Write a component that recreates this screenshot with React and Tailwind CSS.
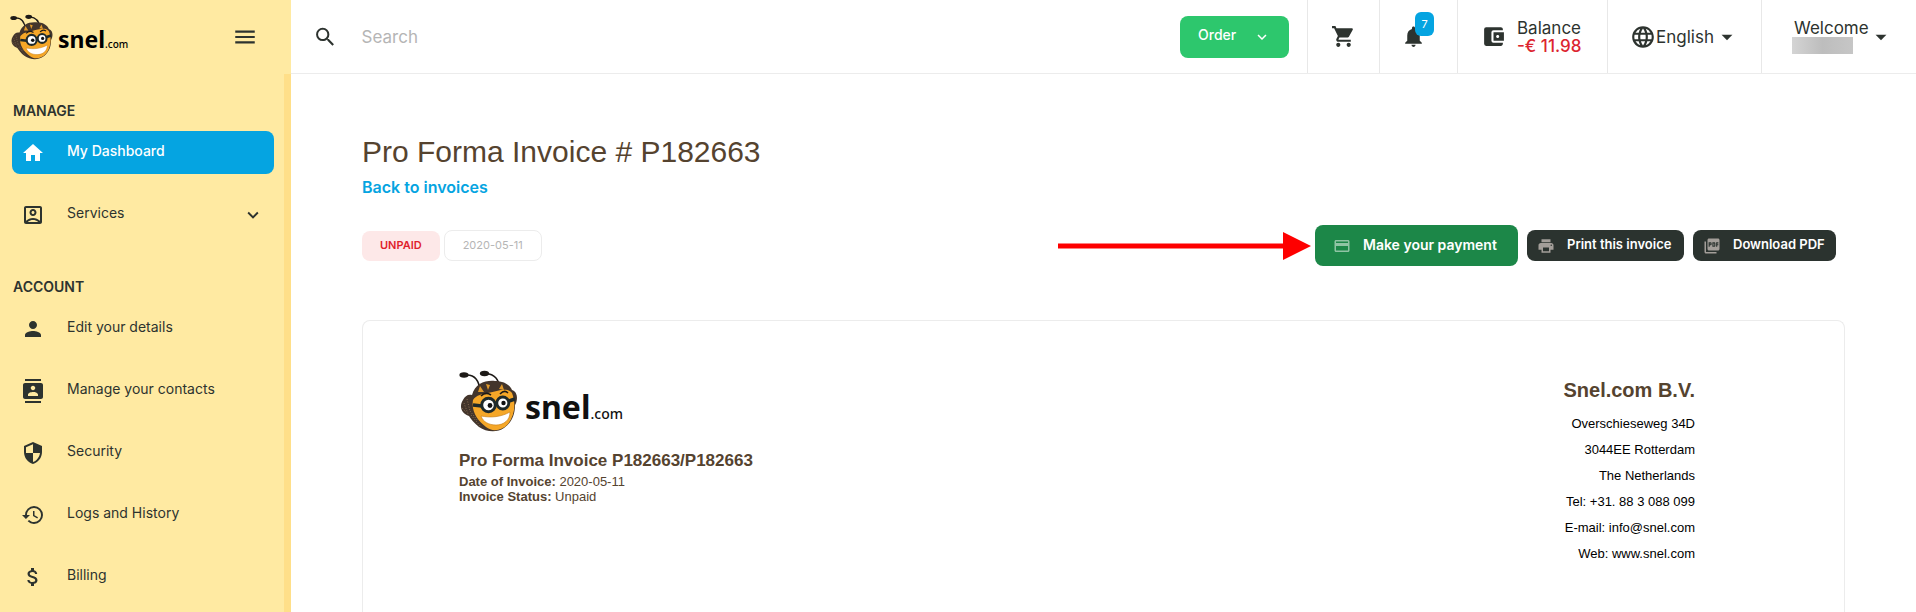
import React, { useState } from 'react';
import {
  MdHome, MdPerson, MdContacts, MdSecurity, MdHistory, MdAttachMoney,
  MdMenu, MdSearch, MdShoppingCart, MdNotifications, MdAccountBalanceWallet,
  MdLanguage, MdArrowDropDown, MdExpandMore, MdPayment, MdPrint, MdPictureAsPdf,
  MdOutlineAccountBox
} from 'react-icons/md';

const MENU = [
  {
    title: 'MANAGE',
    items: [
      { label: 'My Dashboard', icon: MdHome, active: true },
      { label: 'Services', icon: MdOutlineAccountBox, expandable: true }
    ]
  },
  {
    title: 'ACCOUNT',
    items: [
      { label: 'Edit your details', icon: MdPerson },
      { label: 'Manage your contacts', icon: MdContacts },
      { label: 'Security', icon: MdSecurity },
      { label: 'Logs and History', icon: MdHistory },
      { label: 'Billing', icon: MdAttachMoney }
    ]
  }
];

const COMPANY_LINES = [
  'Overschieseweg 34D',
  '3044EE Rotterdam',
  'The Netherlands',
  'Tel: +31. 88 3 088 099',
  'E-mail: info@snel.com',
  'Web: www.snel.com'
];

const BeeHead = ({ className }) => (
  <svg viewBox="0 0 60 62" className={className} aria-hidden="true">
    <path d="M8 5C15 5 20 9 21 21" fill="none" stroke="#1d1a17" strokeWidth="1.6" />
    <path d="M27 3.5C35 4 40 9 41 19" fill="none" stroke="#1d1a17" strokeWidth="1.6" />
    <ellipse cx="5" cy="5" rx="4.6" ry="2.8" fill="#1d1a17" />
    <ellipse cx="25.5" cy="3.5" rx="4.6" ry="2.8" fill="#1d1a17" />
    {/* hair and ear muffs */}
    <path d="M13 25C16 14 26 10 36 11C45 11 51 15 53 20C59 22 59 30 56 35C56 46 52 53 45 58C38 63 27 62 20 57C15 53 12 49 10 46C2 43 0 36 4 30C6 26 9 24 13 25Z" fill="#43352b" />
    <path d="M14 30C17 25 24 24 29 23C39 21 48 17 53 23C57 33 56 45 49 54C43 61 33 62 27 57C19 51 12 42 14 30Z" fill="#f5a728" />
    <path d="M19 22L21 16L25 22ZM27 14L29 20L31 15ZM40 19L43 14L45 20Z" fill="#e09a2b" />
    <path d="M5 33L9 44M8 29L11 41M12 45L22 57M3 38L7 42M11 41L19 51" stroke="#9a7d60" strokeWidth="0.8" strokeDasharray="1 1.6" />
    <path d="M14 35L23 36M36 34L38 33M50 31L56 29" stroke="#1f2a2a" strokeWidth="3.5" />
    <circle cx="29.5" cy="35" r="6.8" fill="#fff" stroke="#1f2a2a" strokeWidth="3" />
    <circle cx="43.8" cy="33" r="6" fill="#fff" stroke="#1f2a2a" strokeWidth="2.8" />
    <circle cx="31" cy="35.5" r="2.4" fill="#111" />
    <circle cx="44.5" cy="33" r="2.2" fill="#111" />
    <path d="M22 26C25 23 29 23 32 25M41 24C44 21 47 21 49 23" fill="none" stroke="#1d1a17" strokeWidth="1.6" />
    <path d="M22 46C32 48 42 47 51 42C51 50 45 55 37 55C30 55 24 52 22 46Z" fill="#fff" stroke="#c47a12" strokeWidth="0.6" />
  </svg>
);

const SidebarItem = ({ item }) => {
  const Icon = item.icon;
  return (
    <a
      href="#"
      className={`flex h-[43px] items-center rounded-lg pl-[9px] pr-2.5 text-sm ${item.active ? 'bg-[#05a4e1] font-medium text-white' : 'text-[#2d332f]'}`}
    >
      <Icon size={24} />
      <span className="ml-[22px] flex-1 pb-1">{item.label}</span>
      {item.expandable && <MdExpandMore size={22} />}
    </a>
  );
};

const Sidebar = ({ onToggle }) => (
  <aside className="flex w-[291px] shrink-0 flex-col bg-[#ffeaa2]">
    <div className="flex h-[74px] items-center justify-between pl-2.5 pr-[33px]">
      <a href="#" className="flex items-center gap-1 text-black">
        <BeeHead className="h-[46px] w-11" />
        <span className="flex items-baseline pt-1 font-['Noto_Sans',sans-serif]">
          <span className="text-[23px] font-bold leading-8">snel</span>
          <span className="text-[10px] font-medium">.com</span>
        </span>
      </a>
      <button type="button" onClick={onToggle} aria-label="Menu" className="text-[#2d332f]">
        <MdMenu size={26} />
      </button>
    </div>
    <nav className="flex-1 border-r-[7px] border-[#ffdf89] pl-3 pr-2.5 pt-[27px]">
      {MENU.map(group => (
        <section key={group.title} className="mb-[41px]">
          <h2 className="mb-2.5 pl-px text-sm font-semibold leading-5 text-[#2d332f]">{group.title}</h2>
          <div className="flex flex-col gap-[19px]">
            {group.items.map(item => <SidebarItem key={item.label} item={item} />)}
          </div>
        </section>
      ))}
    </nav>
  </aside>
);

const TopBar = () => {
  const [query, setQuery] = useState('');

  return (
    <header className="flex h-[74px] shrink-0 items-stretch border-b border-[#ececec] text-[17px] leading-[18px] text-[#2d332f]">
      <label className="flex flex-1 items-center pl-[22px]">
        <MdSearch size={26} />
        <input
          type="search"
          value={query}
          onChange={e => setQuery(e.target.value)}
          placeholder="Search"
          className="ml-6 h-6 w-full bg-transparent outline-none placeholder:text-[#b5b5b5]"
        />
      </label>
      <div className="flex items-center pr-[18px]">
        <button type="button" className="flex h-[42px] w-[109px] items-center justify-between rounded-lg bg-[#2dc76d] px-[18px] text-sm font-medium text-white">
          <span className="pb-1">Order</span>
          <MdExpandMore size={18} />
        </button>
      </div>
      <button type="button" aria-label="Cart" className="flex w-[72px] items-center justify-center border-l border-[#e8e8e8]">
        <MdShoppingCart size={25} />
      </button>
      <button type="button" aria-label="Notifications" className="flex w-[78px] items-center justify-center border-l border-[#e8e8e8]">
        <span className="relative mr-2.5">
          <MdNotifications size={25} />
          <span className="absolute -top-3 left-3.5 flex h-6 w-[19px] items-center justify-center rounded-md bg-[#05a4e1] text-[11px] text-white">7</span>
        </span>
      </button>
      <a href="#" className="flex w-[150px] items-center gap-[11px] border-l border-[#e8e8e8] pl-[23px]">
        <MdAccountBalanceWallet size={25} />
        <span className="flex flex-col">
          <span>Balance</span>
          <span className="font-medium text-[#dc2530]">-€ 11.98</span>
        </span>
      </a>
      <label className="flex w-[154px] items-center border-l border-[#e8e8e8] pl-[22px]">
        <MdLanguage size={26} />
        <select aria-label="Language" className="h-6 appearance-none bg-transparent leading-6 outline-none">
          <option>English</option>
        </select>
        <MdArrowDropDown size={26} />
      </label>
      <button type="button" className="flex w-[155px] items-center border-l border-[#e8e8e8] pl-[30px]">
        <span className="flex w-[76px] flex-col items-start">
          <span className="pl-0.5">Welcome</span>
          <span className="h-[17px] w-[61px] bg-linear-to-r from-[#d4d4d4] via-[#bdbdbd] to-[#c6c6c6]" />
        </span>
        <MdArrowDropDown size={26} />
      </button>
    </header>
  );
};

const InvoiceActions = () => (
  <div className="flex h-[41px] items-center pr-[9px] font-semibold">
    <span className="flex h-[30px] items-center rounded-lg bg-[#fde8e8] px-[18px] text-[11px] text-[#e01f2d]">UNPAID</span>
    <span className="ml-1 flex h-[31px] items-center rounded-lg border border-[#ececec] px-[18px] text-[11px] font-normal text-[#b5b5b5]">2020-05-11</span>
    <svg width="253" height="28" viewBox="0 0 253 28" className="ml-auto mr-1" aria-hidden="true">
      <path d="M0 11.5H225V0L253 14L225 28V16.5H0Z" fill="#fe0000" />
    </svg>
    <div className="flex items-center gap-[9px] text-[13px] text-white">
      <button type="button" className="flex h-[41px] w-[203px] items-center gap-3 rounded-lg bg-[#1c8748] pl-[18px] text-sm">
        <MdPayment size={18} className="text-[#8fc4a4]" />
        <span className="pb-0.5">Make your payment</span>
      </button>
      <button type="button" className="flex h-[31px] w-[157px] items-center gap-3 rounded-lg bg-[#2b332f] pl-2.5">
        <MdPrint size={18} className="text-[#a39e99]" />
        <span className="pb-0.5">Print this invoice</span>
      </button>
      <button type="button" className="flex h-[31px] w-[143px] items-center gap-3 rounded-lg bg-[#2b332f] pl-2.5">
        <MdPictureAsPdf size={18} className="text-[#a39e99]" />
        <span className="pb-0.5">Download PDF</span>
      </button>
    </div>
  </div>
);

const InvoiceCard = () => (
  <article className="mt-[54px] flex flex-1 items-start justify-between rounded-t-lg border border-b-0 border-[#ececec] pl-24 pr-[149px] pt-[49px] font-['Liberation_Sans',Arial,sans-serif] text-[13px] text-[#55432f]">
    <div>
      <div className="flex items-center gap-1.5">
        <BeeHead className="h-[62px] w-[60px]" />
        <span className="flex items-baseline pt-3 font-['Noto_Sans',sans-serif] text-[#111]">
          <span className="text-[32px] font-bold leading-10">snel</span>
          <span className="text-sm font-medium">.com</span>
        </span>
      </div>
      <h2 className="mt-[17px] text-[17px] font-bold leading-6">Pro Forma Invoice P182663/P182663</h2>
      <p className="mt-px leading-[15px]"><b>Date of Invoice:</b> 2020-05-11</p>
      <p className="leading-[15px]"><b>Invoice Status:</b> Unpaid</p>
    </div>
    <address className="pt-2 text-right not-italic leading-[26px] text-black">
      <h3 className="mb-[9px] text-xl font-bold leading-6 text-[#55432f]">Snel.com B.V.</h3>
      {COMPANY_LINES.map(line => <p key={line}>{line}</p>)}
    </address>
  </article>
);

export default function App() {
  const [menuOpen, setMenuOpen] = useState(true);

  return (
    <div className="flex min-h-screen bg-white font-['Inter',sans-serif]">
      {menuOpen && <Sidebar onToggle={() => setMenuOpen(false)} />}
      <div className="flex min-w-0 flex-1 flex-col">
        <TopBar />
        <main className="flex flex-1 flex-col px-[71px] pt-[60px]">
          <h1 className="font-['Liberation_Sans',Arial,sans-serif] text-3xl leading-9 text-[#55432f]">Pro Forma Invoice # P182663</h1>
          <a href="#" className="mb-[26px] mt-[5px] self-start text-base font-semibold leading-6 text-[#05a4e1]">Back to invoices</a>
          <InvoiceActions />
          <InvoiceCard />
        </main>
      </div>
    </div>
  );
}
